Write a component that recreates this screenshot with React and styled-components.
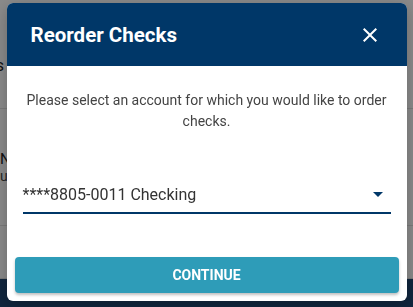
import React, { useState } from "react";
import styled, { createGlobalStyle } from "styled-components";

const GlobalStyle = createGlobalStyle`
    html, body {
        margin: 0;
        padding: 0;
        width: 413px;
        height: 307px;
        overflow: hidden;
        font-family: Roboto, "Liberation Sans", sans-serif;
        background: #ffffff;
    }
`;

const accounts = [
    "****8805-0011 Checking",
    "****8805-0023 Savings",
];

const App = () => {
    const [account, setAccount] = useState(accounts[0]);

    return <>
        <GlobalStyle />
        <Page>
            <Section $height={108}>
                <PageTitle>Reorder Checks title</PageTitle>
            </Section>
            <Section $height={116}>
                <PageText>Name on account</PageText>
                <PageSubText>undefined</PageSubText>
            </Section>
            <Section $height={52} />
            <Footer />
        </Page>
        <Overlay>
            <Modal>
                <Header>
                    <Title>Reorder Checks</Title>
                    <CloseButton aria-label="Close">
                        <svg width="24" height="24" viewBox="0 0 24 24">
                            <path
                                d="M19 6.41 17.59 5 12 10.59 6.41 5 5 6.41 10.59 12 5 17.59 6.41 19 12 13.41 17.59 19 19 17.59 13.41 12z"
                                fill="#ffffff"
                            />
                        </svg>
                    </CloseButton>
                </Header>
                <Body>
                    <Message>
                        Please select an account for which you would like to order checks.
                    </Message>
                    <SelectField>
                        <SelectValue>{account}</SelectValue>
                        <Caret viewBox="0 0 10 5">
                            <path d="M0 0 L10 0 L5 5 Z" fill="#003768" />
                        </Caret>
                        <NativeSelect value={account} onChange={(e) => setAccount(e.target.value)}>
                            {accounts.map((a) => <option key={a} value={a}>{a}</option>)}
                        </NativeSelect>
                    </SelectField>
                </Body>
                <Actions>
                    <ContinueButton>CONTINUE</ContinueButton>
                </Actions>
            </Modal>
        </Overlay>
    </>;
}

const Page = styled.div`
    display: flex;
    flex-direction: column;
    height: 307px;
`;

const Section = styled.div`
    height: ${(p) => p.$height}px;
    flex-shrink: 0;
    border-bottom: 1px solid #e2e2e2;
    display: flex;
    flex-direction: column;
    justify-content: center;
    overflow: hidden;
`;

const PageTitle = styled.div`
    margin-left: -108px;
    margin-top: 22px;
    font-size: 16px;
    color: #222;
    white-space: nowrap;
`;

const PageText = styled.div`
    font-size: 15px;
    color: #222;
    white-space: nowrap;
`;

const PageSubText = styled.div`
    font-size: 14px;
    color: #444;
    white-space: nowrap;
`;

const Footer = styled.div`
    flex: 1;
    background: #1f4672;
`;

const Overlay = styled.div`
    position: fixed;
    inset: 0;
    background: rgba(0, 0, 0, 0.46);
    display: flex;
    justify-content: center;
    align-items: flex-start;
    padding-top: 3px;
`;

const Modal = styled.div`
    width: 400px;
    height: 298px;
    background: #ffffff;
    border-radius: 6px;
    overflow: hidden;
    display: flex;
    flex-direction: column;
    box-shadow: 0 4px 16px rgba(0, 0, 0, 0.25);
`;

const Header = styled.div`
    height: 63px;
    flex-shrink: 0;
    background: #003768;
    display: flex;
    align-items: center;
    justify-content: space-between;
    padding: 0 25px 0 24px;
    box-sizing: border-box;
`;

const Title = styled.h2`
    margin: 0;
    font-size: 20.5px;
    font-weight: 700;
    color: #ffffff;
    letter-spacing: 0;
`;

const CloseButton = styled.button`
    width: 24px;
    height: 24px;
    padding: 0;
    border: none;
    background: none;
    display: flex;
    cursor: pointer;
`;

const Body = styled.div`
    flex: 1;
    padding: 24px 16px 0;
    display: flex;
    flex-direction: column;
`;

const Message = styled.p`
    margin: 0;
    font-size: 14px;
    line-height: 21px;
    color: #444444;
    text-align: center;
`;

const SelectField = styled.div`
    position: relative;
    margin-top: 48px;
    height: 34px;
    display: flex;
    align-items: center;
    border-bottom: 2px solid #003768;
    box-sizing: border-box;
`;

const SelectValue = styled.span`
    flex: 1;
    font-size: 16px;
    color: #333333;
    padding-bottom: 3px;
`;

const Caret = styled.svg`
    width: 10px;
    height: 5px;
    margin-right: 8px;
    margin-bottom: 4px;
`;

const NativeSelect = styled.select`
    position: absolute;
    inset: 0;
    opacity: 0;
    cursor: pointer;
`;

const Actions = styled.div`
    padding: 0 8px 8px;
`;

const ContinueButton = styled.button`
    width: 100%;
    height: 36px;
    border: none;
    border-radius: 4px;
    background: #2e9cb8;
    color: #ffffff;
    font-family: Roboto, "Liberation Sans", sans-serif;
    font-size: 14px;
    font-weight: 700;
    cursor: pointer;
    box-shadow: 0 2px 3px rgba(0, 0, 0, 0.25);
`;

export default App;
